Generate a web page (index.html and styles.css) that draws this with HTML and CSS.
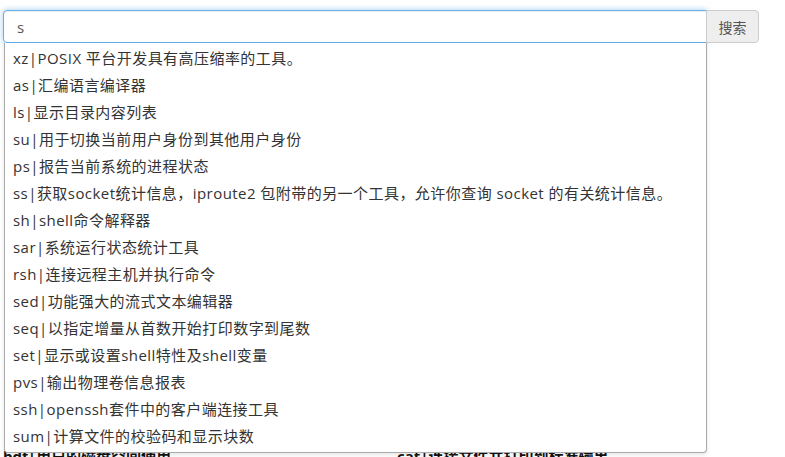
FILE: index.html
```html
<!DOCTYPE html>
<html lang="zh">
<head>
<meta charset="utf-8">
<link rel="stylesheet" href="styles.css">
</head>
<body>
<div class="page">
  <div class="search">
    <div class="group">
      <input class="field" type="text" value="s" autofocus>
      <button class="btn">搜索</button>
    </div>
    <ul class="menu">
      <li>xz|POSIX 平台开发具有高压缩率的工具。</li>
      <li>as|汇编语言编译器</li>
      <li>ls|显示目录内容列表</li>
      <li>su|用于切换当前用户身份到其他用户身份</li>
      <li>ps|报告当前系统的进程状态</li>
      <li>ss|获取socket统计信息，iproute2 包附带的另一个工具，允许你查询 socket 的有关统计信息。</li>
      <li>sh|shell命令解释器</li>
      <li>sar|系统运行状态统计工具</li>
      <li>rsh|连接远程主机并执行命令</li>
      <li>sed|功能强大的流式文本编辑器</li>
      <li>seq|以指定增量从首数开始打印数字到尾数</li>
      <li>set|显示或设置shell特性及shell变量</li>
      <li>pvs|输出物理卷信息报表</li>
      <li>ssh|openssh套件中的客户端连接工具</li>
      <li>sum|计算文件的校验码和显示块数</li>
    </ul>
  </div>
  <div class="content">
    <div class="col">bdf|用户的磁盘空间使用</div>
    <div class="col">cat|连接文件并打印到标准输出</div>
  </div>
</div>
</body>
</html>
```
FILE: styles.css
```css
html, body {
  margin: 0;
  padding: 0;
  background: #fff;
}
body {
  font-family: "Open Sans", "Noto Sans CJK SC", sans-serif;
  font-size: 15px;
  color: #333;
}
.page {
  padding: 10px 25px 0 3px;
}
.search {
  position: relative;
  width: 757px;
}
.group {
  display: flex;
  height: 33px;
}
.field {
  box-sizing: border-box;
  width: 704px;
  height: 33px;
  margin: 0;
  padding: 0 13px;
  border: 1px solid #66afe9;
  border-radius: 4px 0 0 4px;
  outline: none;
  box-shadow: inset 0 1px 1px rgba(0,0,0,.075), 0 0 6px rgba(102,175,233,.6);
  font: inherit;
  font-size: 15px;
  color: #555;
}
.btn {
  box-sizing: border-box;
  width: 53px;
  height: 33px;
  margin: 0 0 0 -1px;
  padding: 0;
  border: 1px solid #ccc;
  border-radius: 0 4px 4px 0;
  background: #eee;
  font: inherit;
  font-size: 14px;
  color: #555;
}
.menu {
  position: absolute;
  top: 33px;
  left: 1px;
  z-index: 5;
  box-sizing: border-box;
  width: 703px;
  margin: 0;
  padding: 2px 0;
  list-style: none;
  background: #fff;
  border: 1px solid #aaa;
  border-top: none;
  border-radius: 0 0 4px 4px;
  box-shadow: 0 2px 4px rgba(0,0,0,.1);
}
.menu li {
  height: 27px;
  line-height: 27px;
  padding: 0 8px;
  white-space: nowrap;
  letter-spacing: 0.45px;
  color: #333;
}
.content {
  display: grid;
  grid-template-columns: 394px 1fr;
  margin-top: 402px;
}
.col {
  font-weight: bold;
  font-size: 15px;
  color: #111;
  line-height: 22px;
  white-space: nowrap;
}
```
